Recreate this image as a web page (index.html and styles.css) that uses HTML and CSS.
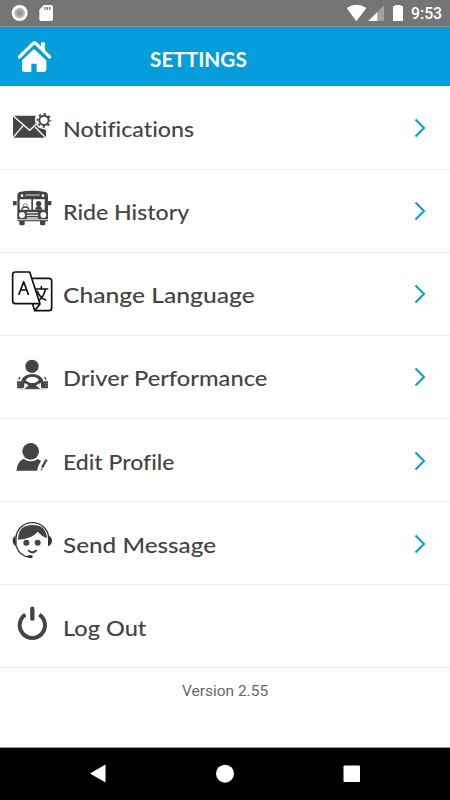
FILE: index.html
```html
<!DOCTYPE html>
<html lang="en">
<head>
<meta charset="utf-8">
<title>Settings</title>
<link rel="stylesheet" href="styles.css">
</head>
<body>
<div class="status">
  <svg width="60" height="27" viewBox="0 0 180 81"><circle cx="59" cy="39" r="24" fill="#fff"/><circle cx="59" cy="39" r="16" fill="#b5b5b5"/><circle cx="59" cy="39" r="8" fill="#969696"/><path fill="#fff" d="M132 15h22q5 0 5 5v38q0 5-5 5h-31q-5 0-5-5V29z"/><path d="M135 21v9m7-9v9m7-9v9" stroke="#777" stroke-width="4"/></svg>
  <svg width="111" height="27" viewBox="0 0 333 81" class="signals"><path fill="#fff" d="M20 24q29-19 59 0L49 64z"/><path fill="#a2a2a2" d="M132 16v47H85z"/><path fill="#fff" d="M112 36v27H85z"/><path fill="#fff" d="M165 15h17v3h7v45h-30V18h6z"/></svg>
  <span class="clock">9:53</span>
</div>
<header class="header">
  <svg width="63" height="59" viewBox="0 81 189 177"><path fill="#fff" d="M66 181l36-34 37 34v27q0 8-8 8h-21v-25H94v25H74q-8 0-8-8zM123 142v-12q0-3 3-3h6q3 0 3 3v24z"/><path d="M58 171l41-40q4-4 9 0l41 40" fill="none" stroke="#fff" stroke-width="9.500" stroke-linecap="round"/></svg>
  <h1>SETTINGS</h1>
</header>
<main>
  <a class="row">
    <svg class="icon" viewBox="0 -27 189 249"><path fill="#444" d="M39 62h68v17l7 18 24 8v23H39z"/><path d="M39 62l50 44 20-19M39 128l31-37M138 129l-33-33" fill="none" stroke="#fff" stroke-width="4"/><circle cx="132" cy="75" r="27" fill="#fff"/><circle cx="132" cy="76" r="14" fill="none" stroke="#444" stroke-width="6"/><circle cx="132" cy="76" r="19.5" fill="none" stroke="#444" stroke-width="5" stroke-dasharray="7 8.315" stroke-dashoffset="3.5"/></svg>
    <span class="label notifications">Notifications</span><svg class="chevron" viewBox="0 0 12 20"><path d="M1.500 1.500L10 10l-8.500 8.500"/></svg>
  </a>
  <a class="row">
    <svg class="icon" viewBox="0 -33 189 249"><path fill="#444" d="M58 36q38-8 78 0 8 2 8 12v76H52V48q0-10 6-12zM39 63h11v13H39zM143 63h11v13h-11zM58 123h16v9q0 4-4 4h-8q-4 0-4-4zM120 123h16v9q0 4-4 4h-8q-4 0-4-4z"/><path fill="#fff" d="M59 58h35v31H59zM99 58h35v31H99z"/><path stroke="#fff" stroke-width="2.500" d="M76 45h43M52 119h92"/><g fill="#fff"><circle cx="66" cy="47" r="4"/><circle cx="129" cy="47" r="4"/><circle cx="66" cy="105" r="9"/><circle cx="130" cy="105" r="9"/></g><path fill="#444" d="M105 89q2-11 11-11t11 11z"/><circle cx="116" cy="71" r="8" fill="#444"/><circle cx="76" cy="77" r="6" fill="none" stroke="#444" stroke-width="2"/><path d="M65 89q2-8 11-8t11 8" fill="none" stroke="#444" stroke-width="4"/><path stroke="#ddd" stroke-width="4" d="M80 98h34M80 106h34M80 114h34"/></svg>
    <span class="label history">Ride History</span><svg class="chevron" viewBox="0 0 12 20"><path d="M1.500 1.500L10 10l-8.500 8.500"/></svg>
  </a>
  <a class="row">
    <svg class="icon" viewBox="0 -30 189 249"><g fill="none" stroke="#111" stroke-width="5" stroke-linejoin="round" stroke-linecap="round"><path d="M46 30h43l31 95H46q-8 0-8-8V38q0-8 8-8zM97 49h50q8 0 8 8v81q0 8-8 8h-43l-6-20M104 146l16-20"/><path d="M57 97l14-38 14 38M62 84h18M108 81h35M124 74v7M136 82q-5 23-19 33M112 88q8 19 25 26"/></g></svg>
    <span class="label language">Change Language</span><svg class="chevron" viewBox="0 0 12 20"><path d="M1.500 1.500L10 10l-8.500 8.500"/></svg>
  </a>
  <a class="row">
    <svg class="icon" viewBox="0 -36 189 249"><circle cx="96" cy="58" r="20" fill="#444"/><path fill="#444" d="M64 101q8-20 33-20t33 20l-10 9-1 16H75l-1-16z"/><path fill="#fff" d="M77 100q5-11 20-11t20 11q-7 7-14 8H91q-7-1-14-8zM75 109q7 2 11 7-6 2-9 7h-3zM119 109q-7 2-11 7 6 2 9 7h3z"/><path fill="#444" d="M51 103h16q5 0 5 5v11q0 5-5 5H51zM144 103h-16q-5 0-5 5v11q0 5 5 5h16z"/><path stroke="#444" stroke-width="4" d="M56 98l4-8M138 98l-4-8"/><path stroke="#888" stroke-width="1.500" d="M51 110h11m-11 7h11M133 110h11m-11 7h11"/><path stroke="#bbb" stroke-width="2" d="M58 127h77"/></svg>
    <span class="label performance">Driver Performance</span><svg class="chevron" viewBox="0 0 12 20"><path d="M1.500 1.500L10 10l-8.500 8.500"/></svg>
  </a>
  <a class="row">
    <svg class="icon" viewBox="0 -34 189 249"><circle cx="92" cy="66" r="25" fill="#444"/><path fill="#444" d="M49 124q3-28 22-35 21 14 43 0l9 6-8 15-4 14z"/><path stroke="#444" stroke-width="7" d="M126 115l11-20"/><path fill="#444" d="M136 89l7 4-2 4-7-4zM123 117l5 3-6 5z"/></svg>
    <span class="label profile">Edit Profile</span><svg class="chevron" viewBox="0 0 12 20"><path d="M1.500 1.500L10 10l-8.500 8.500"/></svg>
  </a>
  <a class="row">
    <svg class="icon" viewBox="0 -34 189 249"><path d="M48 99V78a49 47 0 0 1 98 0v22M48 99q10 34 42 35" fill="none" stroke="#333" stroke-width="4"/><path fill="#333" d="M46 70q-8 4-8 15t10 17zM146 70q10 4 10 15t-12 17zM82 129h12q4 0 4 4t-4 4h-8z"/><path fill="#444" d="M54 82q0-44 43-44 42 0 44 40-17-6-28-20-17 22-59 24z"/><g fill="#444"><circle cx="79" cy="91" r="9"/><circle cx="113" cy="91" r="9"/></g><path d="M86 115q10 10 22 0" fill="none" stroke="#444" stroke-width="6" stroke-linecap="round"/></svg>
    <span class="label message">Send Message</span><svg class="chevron" viewBox="0 0 12 20"><path d="M1.500 1.500L10 10l-8.500 8.500"/></svg>
  </a>
  <a class="row">
    <svg class="icon" viewBox="0 -37 189 249"><path d="M76 55a38 38 0 1 0 42 0" fill="none" stroke="#444" stroke-width="12"/><path d="M97 37v30" stroke="#444" stroke-width="13" stroke-linecap="round"/></svg>
    <span class="label logout">Log Out</span>
  </a>
  <p class="version">Version 2.55</p>
</main>
<nav class="navbar"><svg width="450" height="52" viewBox="0 748 450 52"><path fill="#fff" d="M90 773.500l15.500-9v18z"/><circle cx="225" cy="773.700" r="9" fill="#fff"/><rect x="343.500" y="765.500" width="16.500" height="16.500" rx="1" fill="#fff"/></svg></nav>
</body>
</html>
```
FILE: styles.css
```css
* { box-sizing: border-box; }
body { margin: 0; width: 450px; height: 800px; display: flex; flex-direction: column; background: #fff; overflow: hidden; font-family: Lato, sans-serif; }
svg { display: block; flex: none; }
.status { display: flex; height: 27px; background: #757575; border-bottom: 1px solid #8799a2; color: #fff; }
.signals { margin-left: 280px; margin-right: -40px; }
.clock { font: 500 15.800px/28px Roboto, sans-serif; }
.header { display: flex; height: 59px; background: #059ddc; color: #fff; }
.header h1 { margin: 0 0 0 87px; font-size: 20px; font-weight: 700; line-height: 65px; transform: scaleX(1.037); transform-origin: left; }
main { flex: 1; padding-top: .5px; }
.row { display: flex; align-items: center; height: 83.15px; border-bottom: 1.500px solid #ececec; }
.icon { width: 63px; height: 83px; margin-top: -1px; }
.label { color: #444; font-size: 22px; font-weight: 500; line-height: 30px; padding-top: 3px; white-space: nowrap; font-variant-ligatures: none; transform-origin: left; }
.notifications { transform: scaleX(1.054); }
.history { transform: scaleX(1.050); }
.language { transform: scaleX(1.120); }
.performance { transform: scaleX(1.077); }
.profile { transform: scaleX(1.046); }
.message { transform: scaleX(1.104); }
.logout { transform: scaleX(1.071); }
.chevron { width: 12px; height: 20px; margin-left: auto; margin-right: 24px; margin-top: 1px; fill: none; stroke: #059ddc; stroke-width: 2; }
.version { margin: 12.500px 0 0; text-align: center; font: 15.500px/20px Roboto, sans-serif; color: #666; }
.navbar { height: 53px; background: #000; border-top: 1px solid #999; }
```
